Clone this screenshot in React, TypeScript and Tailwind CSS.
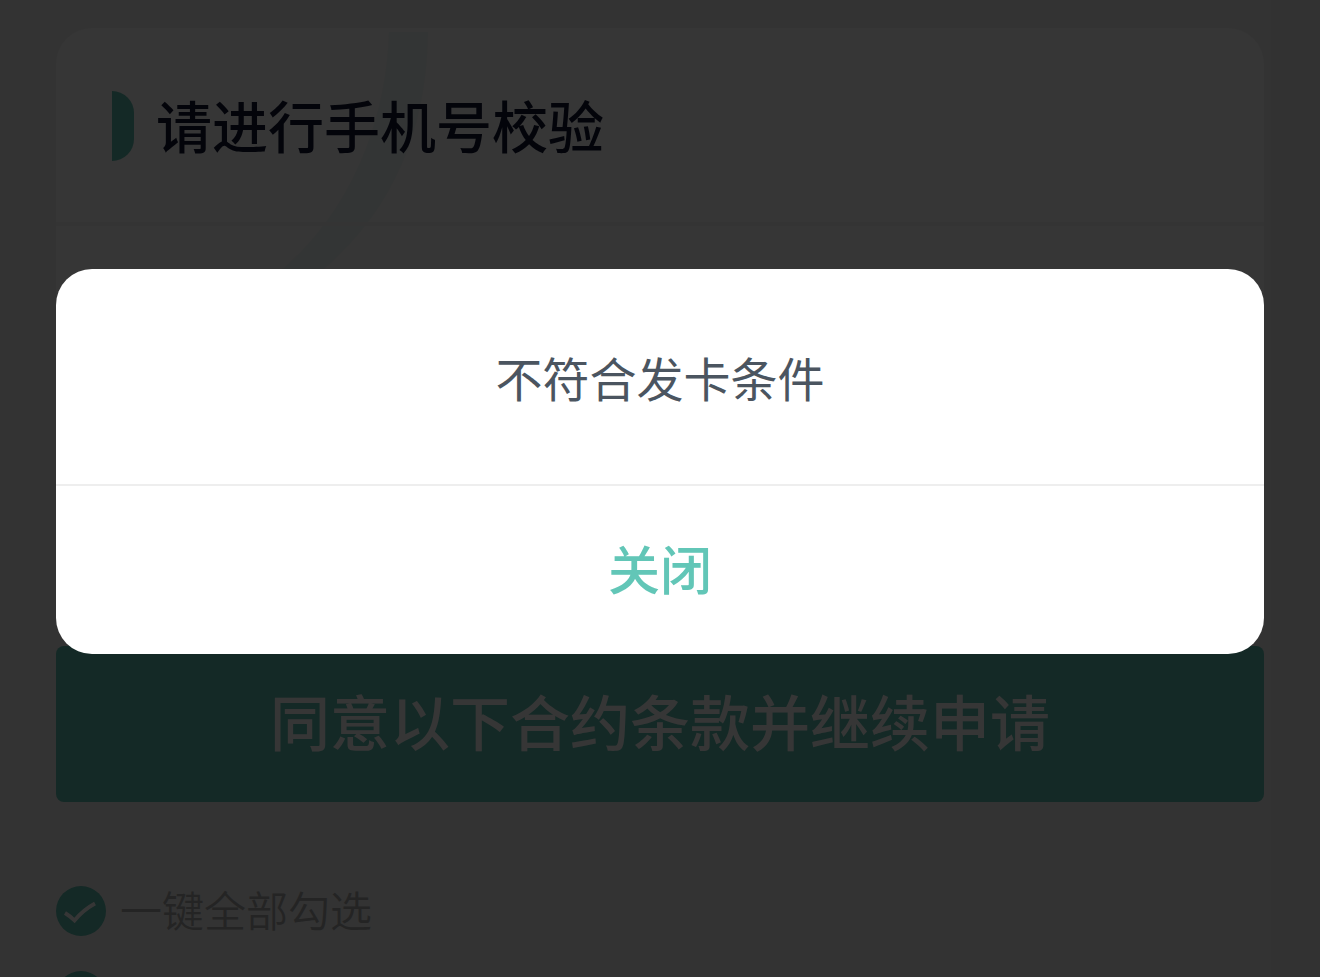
import React, { useState } from "react";

type CheckProps = { id: string; name: string; children?: React.ReactNode };

function CheckRow({ id, name, children }: CheckProps) {
  const [checked, setChecked] = useState(true);
  return (
    <div className="flex h-[50px] items-center gap-[14px]">
      <span className="relative size-[50px] shrink-0">
        <input
          id={id}
          type="checkbox"
          aria-label={name}
          checked={checked}
          onChange={(e) => setChecked(e.target.checked)}
          className="block size-[50px] appearance-none rounded-full bg-[#ccc] checked:bg-[#5fc0b1]"
        />
        <svg
          viewBox="0 0 50 50"
          className="pointer-events-none absolute inset-0 size-full"
          fill="none"
          aria-hidden="true"
        >
          <path d="M9 27 Q14 30 18.5 34.5 Q27 24 39 17.5" stroke="#fff" strokeWidth="3.8" />
        </svg>
      </span>
      {children && (
        <label htmlFor={id} className="pb-1 text-[42px] leading-[50px] font-[350] text-[#aaa]">
          {children}
        </label>
      )}
    </div>
  );
}

function Watermark() {
  return (
    <svg
      viewBox="0 0 400 400"
      className="pointer-events-none absolute top-0 left-0 size-[400px]"
      aria-hidden="true"
    >
      <path
        d="M333 4 H372 C371 100 338 195 240 262 L200 262 C290 200 330 100 333 4 Z"
        fill="#f1faf8"
      />
    </svg>
  );
}

export default function App() {
  const [open, setOpen] = useState(true);
  return (
    <div className="relative h-screen overflow-hidden bg-[#f0f0f0] font-['Noto_Sans_CJK_SC',sans-serif]">
      <main className="px-14 pt-7">
        <section className="relative h-[590px] overflow-hidden rounded-t-[36px] bg-[#fcfcfc]">
          <Watermark />
          <header className="relative flex h-[198px] items-center gap-[22px] border-b-4 border-[#f3f3f3] px-14 pt-[2px]">
            <span className="h-[70px] w-[22px] rounded-r-[22px] bg-[#5fc0b1]" />
            <h1 className="pb-1 text-[56px] leading-[70px] font-medium text-[#0e1330]">
              请进行手机号校验
            </h1>
          </header>
        </section>
        <button
          type="button"
          className="mt-7 block h-[156px] w-full rounded-lg bg-[#5fc0b1] pb-2 text-[60px] leading-[80px] font-medium text-white"
        >
          同意以下合约条款并继续申请
        </button>
        <div className="mt-[84px] flex flex-col gap-[35px]">
          <CheckRow id="agree-all" name="一键全部勾选">
            一键全部勾选
          </CheckRow>
          <CheckRow id="agree-first" name="合约条款" />
        </div>
      </main>

      {open && (
        <div className="absolute inset-0 bg-black/79 px-14 pt-[269px]">
          <div
            role="dialog"
            aria-modal="true"
            aria-labelledby="dialog-message"
            className="overflow-hidden rounded-[36px] bg-white"
          >
            <p
              id="dialog-message"
              className="border-b-2 border-[#eee] px-14 pt-[74px] pb-[73px] text-center text-[47px] leading-[68px] text-[#4b5560]"
            >
              不符合发卡条件
            </p>
            <button
              type="button"
              onClick={() => setOpen(false)}
              className="block h-[168px] w-full pb-1 text-[52px] leading-[68px] font-medium text-[#62c6b7]"
            >
              关闭
            </button>
          </div>
        </div>
      )}
    </div>
  );
}
